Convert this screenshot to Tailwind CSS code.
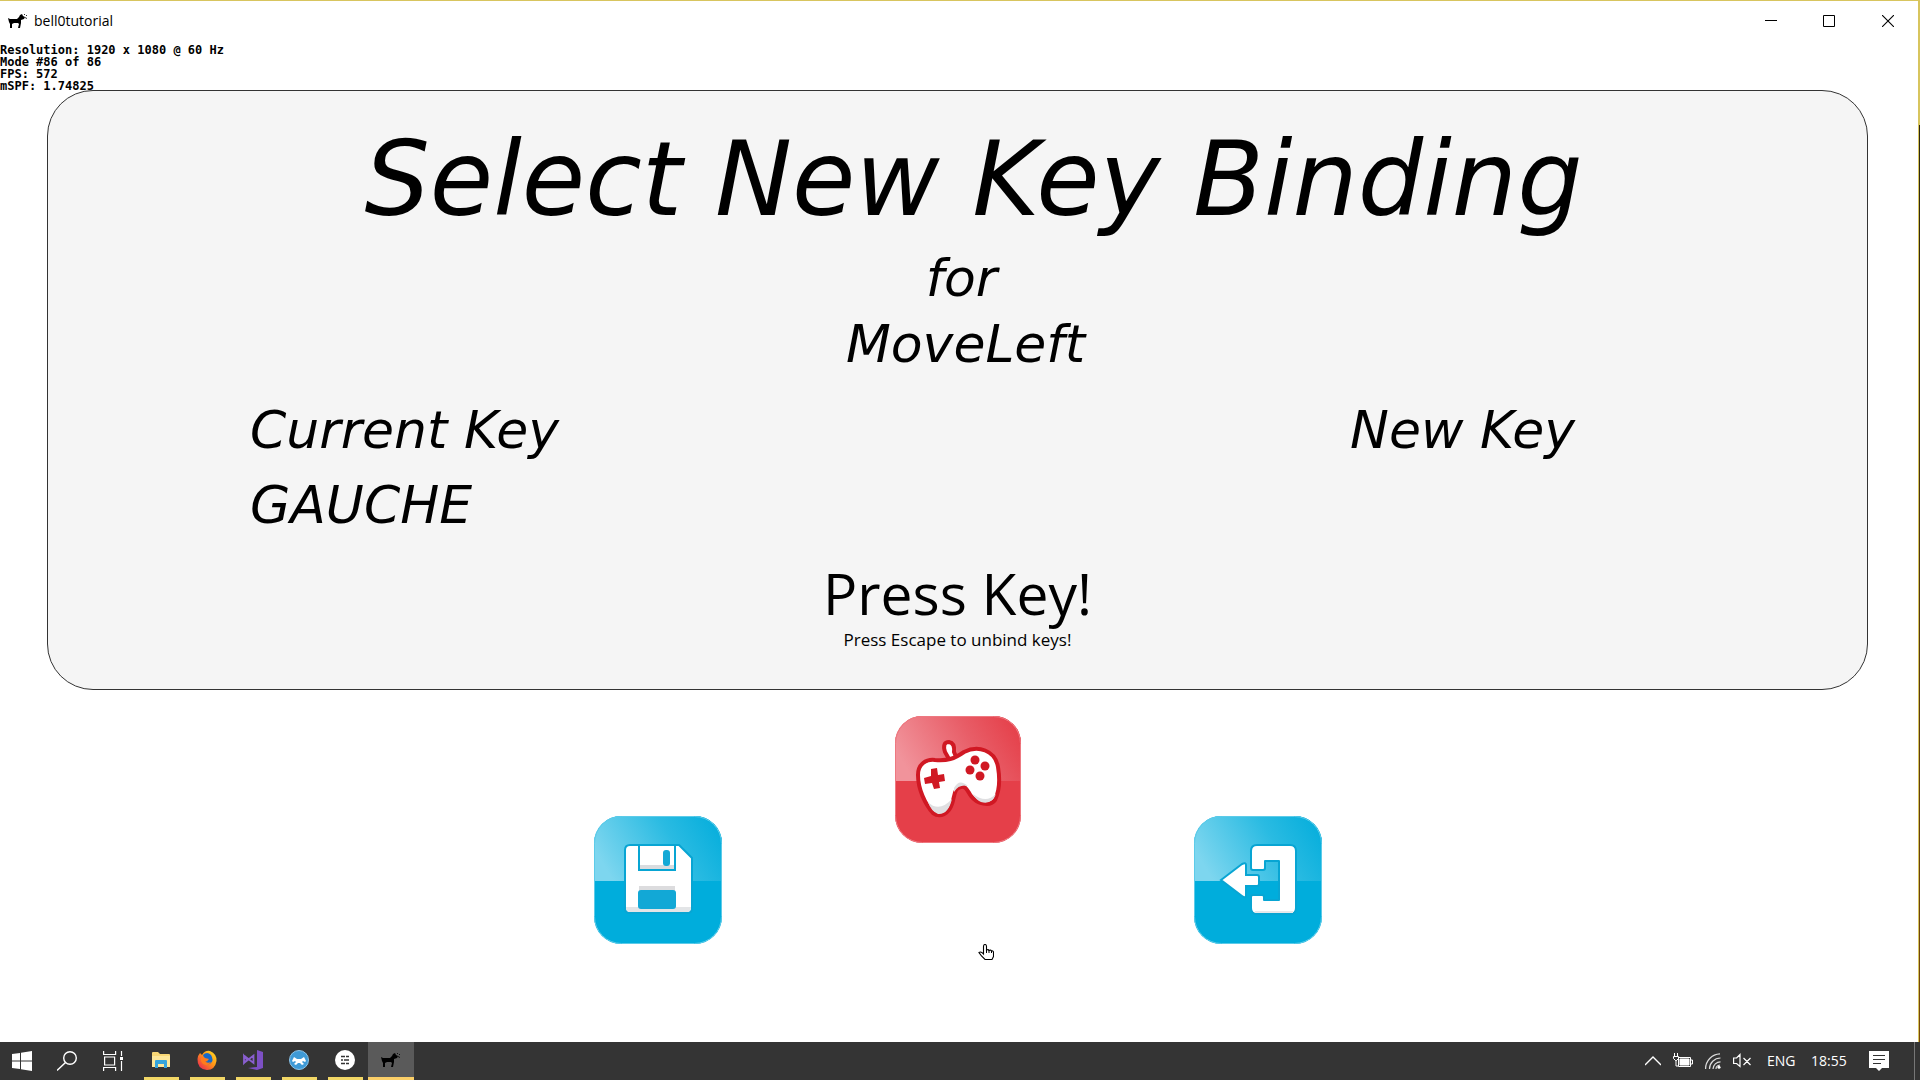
<!DOCTYPE html>
<html lang="en">
<head>
<meta charset="utf-8">
<title>bell0tutorial</title>
<script src="https://cdn.jsdelivr.net/npm/@tailwindcss/browser@4"></script>
</head>
<body class="flex h-screen flex-col overflow-hidden bg-white font-['Segoe_UI','Open_Sans',sans-serif] text-black">

<svg class="absolute size-0" aria-hidden="true">
  <defs>
    <linearGradient id="blueShine" x1="0" y1="0.5" x2="1" y2="0.2"><stop offset="0" stop-color="#7dd6ef"/><stop offset="0.6" stop-color="#2abbe2"/><stop offset="1" stop-color="#06aedc"/></linearGradient>
    <linearGradient id="redShine" x1="0" y1="0.5" x2="1" y2="0.2"><stop offset="0" stop-color="#f1939b"/><stop offset="0.6" stop-color="#e85d67"/><stop offset="1" stop-color="#e53f49"/></linearGradient>
    <linearGradient id="fox" x1="1" y1="0" x2="0" y2="1"><stop offset="0" stop-color="#ffe226"/><stop offset="0.45" stop-color="#ff9416"/><stop offset="1" stop-color="#e8155c"/></linearGradient>
    <symbol id="dog" viewBox="0 0 20 16">
      <path d="M0 5l2 1h7l2-2 1-2 2-1 1 2 2 1-1 2-3 1v3l-1 5h-2l1-4-1-1H6l-2 1v4H2l0-4-1-2z"/>
      <path d="M16 2l1-1M18 3l1-1M17 4.500l2 1" stroke="#000" stroke-width="0.8"/>
    </symbol>
  </defs>
</svg>

<div class="flex min-h-0 flex-1">
  <section class="flex min-w-0 flex-1 flex-col border-t border-r border-[#d8c55e]" aria-label="bell0tutorial window">
    <header class="flex h-10 items-center pl-2">
      <svg class="h-4 w-5" aria-hidden="true"><use href="#dog"/></svg>
      <h1 class="ml-1.5 flex-1 text-[14px] leading-5">bell0tutorial</h1>
      <button class="flex h-10 w-[58px] items-center justify-center" aria-label="Minimize"><svg class="size-3" viewBox="0 0 12 12"><path d="M0 5.500h12" stroke="#000"/></svg></button>
      <button class="flex h-10 w-[58px] items-center justify-center" aria-label="Maximize"><svg class="size-3" viewBox="0 0 12 12"><path d="M.5.5h11v11H.5z" fill="none" stroke="#000"/></svg></button>
      <button class="flex h-10 w-[60px] items-center justify-center" aria-label="Close"><svg class="size-3" viewBox="0 0 12 12"><path d="M0 0l12 12M12 0L0 12" stroke="#000" stroke-width="1.1"/></svg></button>
    </header>

    <div class="mt-[3px] font-['Lucida_Console','DejaVu_Sans_Mono',monospace] text-[12px] leading-3 font-bold">
      <p>Resolution: 1920 x 1080 @ 60 Hz</p>
      <p>Mode #86 of 86</p>
      <p>FPS: 572</p>
      <p>mSPF: 1.74825</p>
    </div>

    <main class="-mt-0.5 flex flex-col pr-[50px] pl-[47px]">
      <div class="flex h-[600px] flex-col rounded-[46px] border border-[#333] bg-[#f5f5f5] pt-[22px]">
        <div class="text-center font-['Lucida_Handwriting','DejaVu_Sans',cursive] italic">
          <h2 class="pl-8 text-[103px] leading-[132px]">Select New Key Binding</h2>
          <p class="pl-2 text-[52px] leading-[66px]">for</p>
          <p class="pl-4 text-[52px] leading-[66px]">MoveLeft</p>
        </div>
        <dl class="mt-4 flex pl-[202px] font-['Lucida_Handwriting','DejaVu_Sans',cursive] text-[52px] leading-[75px] italic">
          <div class="w-[1100px]"><dt>Current Key</dt><dd>GAUCHE</dd></div>
          <div><dt>New Key</dt><dd></dd></div>
        </dl>
        <div class="mt-4 text-center">
          <p class="text-[57px] leading-[68px]">Press Key!</p>
          <p class="text-[17px] leading-[26px]">Press Escape to unbind keys!</p>
        </div>
      </div>

      <div class="mt-[26px] flex justify-center gap-[172px]">
        <button class="mt-[100px] size-32" aria-label="Save">
          <svg class="size-full" viewBox="0 0 128 128">
            <rect width="128" height="128" rx="27" fill="#00addc"/>
            <path d="M0 65V27A27 27 0 0 1 27 0h74a27 27 0 0 1 27 27v38z" fill="url(#blueShine)"/>
            <rect x=".5" y=".5" width="127" height="127" rx="27" fill="none" stroke="#5ccbe9"/>
            <path d="M36 29h49l13 13v50q0 5-5 5H36q-5 0-5-5V34q0-5 5-5z" fill="#fff" stroke="#08a5d3" stroke-width="2"/>
            <path d="M32 91h65q0 5-4 5H36q-4 0-4-5z" fill="#e3e5e7"/>
            <path d="M45 30v24h36V30" fill="#fff" stroke="#08a5d3" stroke-width="2"/>
            <path d="M46 49h34v4H46z" fill="#d9dcdf"/><rect x="69" y="34" width="7" height="16" rx="3" fill="#14a9d6"/>
            <path d="M45 70h36v5H45z" fill="#dcdcde"/><rect x="44" y="74" width="38" height="19" rx="3" fill="#12a8d6"/>
          </svg>
        </button>
        <button class="size-32" aria-label="Bind gamepad">
          <svg class="size-full" viewBox="0 0 128 128">
            <rect x="1" width="126" height="127" rx="27" fill="#e53f49"/>
            <path d="M1 65V27A27 27 0 0 1 28 0h72a27 27 0 0 1 27 27v38z" fill="url(#redShine)"/>
            <rect x="1.500" y=".5" width="125" height="126" rx="27" fill="none" stroke="#ee7880"/>
            <path d="M55 43L51 36Q48 26 55 26Q61 27 60 36L63 43" fill="#fff" stroke="#d01823" stroke-width="4"/>
            <path d="M24 59C24 48 32 43 41 44C53 45 60 43 70 36C84 29 101 34 104 51C106 63 105 76 101 84C96 91 83 88 77 80C73 74 72 70 67 71C60 72 61 79 58 88C55 98 46 102 39 97C31 88 24 73 24 59Z" fill="#fff" stroke="#d01823" stroke-width="4"/>
            <path d="M34 86Q45 97 58 83Q54 99 44 98Q37 95 34 86zM79 78Q92 88 102 78Q98 89 87 86Q82 84 79 78zM60 72Q65 62 74 70Q65 68 60 76z" fill="#dfdfe1"/>
            <path d="M37 53l6-1 1 7 6-1 1 7-6 1 1 6-6 1-2-6-7 1-1-6 7-2z" fill="#d01823"/>
            <g fill="#d01823"><circle cx="81" cy="44" r="4.500"/><circle cx="91" cy="50" r="4.500"/><circle cx="76" cy="54" r="4.500"/><circle cx="86" cy="60" r="4.500"/></g>
          </svg>
        </button>
        <button class="mt-[100px] size-32" aria-label="Exit">
          <svg class="size-full" viewBox="0 0 128 128">
            <rect width="128" height="128" rx="27" fill="#00addc"/>
            <path d="M0 65V27A27 27 0 0 1 27 0h74a27 27 0 0 1 27 27v38z" fill="url(#blueShine)"/>
            <rect x=".5" y=".5" width="127" height="127" rx="27" fill="none" stroke="#5ccbe9"/>
            <path d="M63 29h33q6 0 6 6v57q0 6-6 6H63q-6 0-6-6V81q0-2 2-2h9q2 0 2 2v3h15V45H71v7q0 2-2 2H59q-2 0-2-2V35q0-6 6-6z" fill="#fff" stroke="#08a5d3" stroke-width="2" stroke-linejoin="round"/>
            <path d="M27 64L48 48q4-2 4 1v10h11q2 0 2 2v7q0 2-2 2H52v9q0 4-4 1z" fill="#fff" stroke="#08a5d3" stroke-width="2"/>
            <path d="M61 96h38" stroke="#e6e8ea" stroke-width="2"/>
          </svg>
        </button>
      </div>
    </main>
  </section>
  <div class="w-px bg-linear-to-b from-[#d8c55e] from-12% via-[#2c270f] via-12% to-[#7a4a08]" aria-hidden="true"></div>
</div>

<!-- hand pointer -->
<svg class="absolute top-[944px] left-[978px] h-[18px] w-4" viewBox="0 0 16 18" aria-hidden="true"><path d="M5.500 10V2.500Q5.500.5 7 .5t1.500 2V6q2-1 2.500.5 2-1 2.500.5 2-.5 2 1.500v4l-1.500 3H7L3.500 12 1 8.500Q3 7 5.500 10z" fill="#fff" stroke="#000" stroke-width="1.1"/><path d="M8.500 5v4M11 6v3M13.500 7v2" stroke="#000"/></svg>

<footer class="flex h-[38px] items-stretch bg-[#343434] text-white">
  <nav class="flex flex-1" aria-label="Taskbar">
    <button class="flex w-[44px] items-center justify-center" aria-label="Start"><svg class="size-5" viewBox="0 0 20 20" fill="#fff"><path d="M0 3l8-1v7.500H0zM9 1.800L20 0v9.500H9zM0 10.500h8V18l-8-1zM9 10.500h11V20L9 18.200z"/></svg></button>
    <button class="flex w-[46px] items-center justify-center" aria-label="Search"><svg class="size-5" viewBox="0 0 20 20" fill="none" stroke="#fff" stroke-width="1.400"><circle cx="13" cy="7" r="6.300"/><path d="M8.500 11.500L0 19.500"/></svg></button>
    <button class="mr-0.5 flex w-[46px] items-center justify-center" aria-label="Task view"><svg class="size-5" viewBox="0 0 20 20" fill="none" stroke="#fff" stroke-width="1.200"><path d="M.6 0v3.500h12V0M.6 20v-3.500h12V20M1.600 6h10v8h-10zM18.500 0v5M18.500 10v10"/><path d="M17 6h3v3h-3z" fill="#fff" stroke="none"/></svg></button>
    <button class="flex w-[46px] flex-col items-center" aria-label="File Explorer"><span class="flex flex-1 items-center"><svg class="h-4 w-[18px]" viewBox="0 0 18 16"><path d="M0 1q0-1 1-1h5l2 2h9q1 0 1 1v12H0z" fill="#f8d775"/><path d="M0 4h18v11H0z" fill="#fde79a"/><path d="M3 16V9q0-1 1-1h10q1 0 1 1v7h-3v-4H6v4z" fill="#35a5dc"/></svg></span><span class="h-[3px] w-[35px] bg-[#f2d766]"></span></button>
    <button class="flex w-[46px] flex-col items-center" aria-label="Firefox"><span class="flex flex-1 items-center"><svg class="size-5" viewBox="0 0 20 20"><path d="M3 3l2 2q3-5 8-4 7 3 6.500 10Q18 20 10 20 0 19 .5 9 1 5 3 3z" fill="url(#fox)"/><path d="M6 5q4-4 8 0 3 5 0 8-4 3-7-1l4-1-4-3z" fill="#1769c8"/><path d="M4 8q2-3 4 0l4 1q-1 2-4 2 2 3 6 1-3 5-8 2-3-3-2-6z" fill="#ff7b1c"/></svg></span><span class="h-[3px] w-[35px] bg-[#f2d766]"></span></button>
    <button class="flex w-[46px] flex-col items-center" aria-label="Visual Studio"><span class="flex flex-1 items-center"><svg class="size-5" viewBox="0 0 20 20"><path d="M14 0l6 2v16l-6 2-9-2 9-1z" fill="#7d50c4"/><path d="M1 6v7l3-3zM1.500 6l9 7V5.500l-9 7" fill="none" stroke="#8a5fd0" stroke-width="1.800"/></svg></span><span class="h-[3px] w-[35px] bg-[#f2d766]"></span></button>
    <button class="flex w-[46px] flex-col items-center" aria-label="Git client"><span class="flex flex-1 items-center"><svg class="size-5" viewBox="0 0 20 20"><circle cx="10" cy="10" r="9.500" fill="#3f9ad6" stroke="#8cc5ea"/><path d="M3 11l2-4 3 2h4l3-2 2 4-1 1-2-1-1 1 2 2-2 1-2-2H9l-2 2-2-1 2-2-1-1-2 1z" fill="#fff"/></svg></span><span class="h-[3px] w-[35px] bg-[#f2d766]"></span></button>
    <button class="flex w-[46px] flex-col items-center" aria-label="Notes"><span class="flex flex-1 items-center"><svg class="size-5" viewBox="0 0 20 20"><circle cx="10" cy="10" r="10" fill="#fff"/><path d="M6 6.500h4M11 6.500h3M6 10h2M9 10h5M6 13.500h4M11 13.500h3" stroke="#333" stroke-width="1.500"/></svg></span><span class="h-[3px] w-[35px] bg-[#f2d766]"></span></button>
    <button class="flex w-[46px] flex-col items-center bg-[#5a5a5a]" aria-label="bell0tutorial"><span class="flex flex-1 items-center"><svg class="h-4 w-5"><use href="#dog"/></svg></span><span class="h-[3px] w-full bg-[#fbcf68]"></span></button>
  </nav>
  <div class="flex items-center">
    <button class="mr-3" aria-label="Show hidden icons"><svg class="h-4 w-4" viewBox="0 0 16 16"><path d="M0 12l8-8 8 8" fill="none" stroke="#fff" stroke-width="1.300"/></svg></button>
    <svg class="mr-3 h-4 w-5" viewBox="0 0 20 16" fill="none" stroke="#fff" role="img" aria-label="Battery"><path d="M5.500 4.500h12v9h-12zM18 7h1.500v4H18M1.500 0v3M4.500 0v3M.5 3.500h5v2l-2 2h-1l-2-2zM3 7v6h2"/><path d="M7 6h9v6H7z" fill="#fff"/></svg>
    <svg class="mr-3 h-4 w-4" viewBox="0 0 16 16" fill="none" stroke="#ddd" stroke-width="1.200" role="img" aria-label="Wi-Fi"><path d="M.6 16A15 15 0 0 1 15 .8M4.500 16A11 11 0 0 1 15.500 5M8 16A7.500 7.500 0 0 1 15.500 8.800"/><path d="M11 16q0-3.500 4-4" /><circle cx="14" cy="14.300" r="1.500" fill="#fff" stroke="none"/></svg>
    <svg class="mr-4 h-4 w-[18px]" viewBox="0 0 18 16" fill="none" stroke="#fff" stroke-width="1.200" role="img" aria-label="Muted"><path d="M.6 5h3L7 1.500v12L3.600 10.500h-3zM10.500 5l7 7M17.500 5l-7 7"/></svg>
    <span class="w-11 text-[14px] leading-5">ENG</span>
    <time class="w-[58px] text-[14px] leading-5">18:55</time>
    <button class="mr-[25px]" aria-label="Notifications"><svg class="size-5" viewBox="0 0 20 20"><path d="M0 0h20v17h-7l-3 3-3-3H0z" fill="#fff"/><path d="M4 4.500h12M4 8.500h12M4 12.500h8" stroke="#333" stroke-width="1.200"/></svg></button>
    <span class="mr-[5px] h-full w-px bg-[#777]"></span>
  </div>
</footer>
</body>
</html>
